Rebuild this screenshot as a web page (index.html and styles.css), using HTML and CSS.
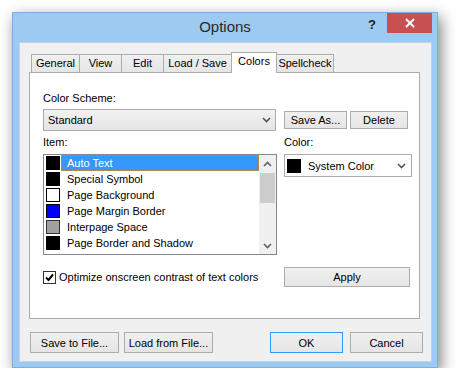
FILE: index.html
```html
<!DOCTYPE html>
<html lang="en">
<head>
  <meta charset="UTF-8" />
  <title>Options</title>
  <link rel="stylesheet" href="styles.css">
</head>
<body>
  <div class="window">
    <div class="titlebar">
      <span class="title">Options</span>
      <div class="controls">
        <span class="help">?</span>
        <span class="close">
          <svg width="10" height="10" viewBox="0 0 10 10"><path d="M1 1L9 9M9 1L1 9" stroke="#fff" stroke-width="2"/></svg>
        </span>
      </div>
    </div>

    <div class="client">
      <div class="tabs">
        <div class="tab tab-general">General</div>
        <div class="tab tab-view">View</div>
        <div class="tab tab-edit">Edit</div>
        <div class="tab tab-load">Load / Save</div>
        <div class="tab tab-colors active">Colors</div>
        <div class="tab tab-spell">Spellcheck</div>
      </div>

      <div class="pane">
        <div class="label">Color Scheme:</div>

        <div class="row row-scheme">
          <div class="col-left">
            <div class="dropdown scheme">
              <span>Standard</span>
              <svg class="chev" width="9" height="6" viewBox="0 0 9 6"><path d="M1 1L4.5 4.5L8 1" fill="none" stroke="#555" stroke-width="1.6"/></svg>
            </div>
          </div>
          <div class="col-right">
            <button class="btn btn-saveas">Save As...</button>
            <button class="btn btn-delete">Delete</button>
          </div>
        </div>

        <div class="row row-labels">
          <div class="col-left label">Item:</div>
          <div class="col-right label">Color:</div>
        </div>

        <div class="row row-list">
          <div class="col-left">
            <div class="listbox">
              <div class="items">
                <div class="item selected"><span class="sw sw-black"></span><span class="name">Auto Text</span></div>
                <div class="item"><span class="sw sw-black"></span><span class="name">Special Symbol</span></div>
                <div class="item"><span class="sw sw-white"></span><span class="name">Page Background</span></div>
                <div class="item"><span class="sw sw-blue"></span><span class="name">Page Margin Border</span></div>
                <div class="item"><span class="sw sw-gray"></span><span class="name">Interpage Space</span></div>
                <div class="item"><span class="sw sw-black"></span><span class="name">Page Border and Shadow</span></div>
              </div>
              <div class="scrollbar">
                <div class="sb-arrow">
                  <svg width="9" height="6" viewBox="0 0 9 6"><path d="M1 5L4.5 1.5L8 5" fill="none" stroke="#606060" stroke-width="1.6"/></svg>
                </div>
                <div class="sb-thumb"></div>
                <div class="sb-track"></div>
                <div class="sb-arrow">
                  <svg width="9" height="6" viewBox="0 0 9 6"><path d="M1 1L4.5 4.5L8 1" fill="none" stroke="#606060" stroke-width="1.6"/></svg>
                </div>
              </div>
            </div>
          </div>
          <div class="col-right">
            <div class="dropdown color-pick">
              <span class="sw sw-black"></span>
              <span class="pick-name">System Color</span>
              <svg class="chev" width="9" height="6" viewBox="0 0 9 6"><path d="M1 1L4.5 4.5L8 1" fill="none" stroke="#555" stroke-width="1.6"/></svg>
            </div>
          </div>
        </div>

        <div class="row row-check">
          <div class="col-left check">
            <span class="checkbox">
              <svg width="11" height="11" viewBox="0 0 11 11"><path d="M2 5.5L4.5 8L9 2.5" fill="none" stroke="#000" stroke-width="2"/></svg>
            </span>
            <span>Optimize onscreen contrast of text colors</span>
          </div>
          <div class="col-right">
            <button class="btn btn-apply">Apply</button>
          </div>
        </div>
      </div>

      <div class="footer">
        <button class="btn btn-file">Save to File...</button>
        <button class="btn btn-file">Load from File...</button>
        <button class="btn btn-dlg btn-ok">OK</button>
        <button class="btn btn-dlg">Cancel</button>
      </div>
    </div>
  </div>
</body>
</html>
```

FILE: styles.css
```css
* {
  box-sizing: border-box;
}

body {
  margin: 0;
  background: #fff;
  font-family: "Liberation Sans", Arial, sans-serif;
  font-size: 11px;
  color: #000;
}

.window {
  margin: 12px 0 0 12px;
  width: 426px;
  height: 356px;
  background: #9ccaf0;
  border: 1px solid #7eaedb;
  box-shadow: 3px 5px 14px rgba(0, 0, 0, 0.5);
  display: flex;
  flex-direction: column;
}

.titlebar {
  height: 29px;
  display: grid;
  grid-template-columns: 1fr auto 1fr;
}

.title {
  grid-column: 2;
  font-size: 15px;
  line-height: 28px;
  color: #2b2b2b;
}

.controls {
  grid-column: 3;
  justify-self: end;
  display: flex;
  align-items: flex-start;
  margin-right: 5px;
}

.help {
  font-weight: bold;
  font-size: 13px;
  line-height: 13px;
  margin: 5px 11px 0 0;
  color: #222;
}

.close {
  width: 45px;
  height: 20px;
  background: #c75050;
  display: flex;
  align-items: center;
  justify-content: center;
}

.client {
  flex: 1;
  margin: 0 5px 5px 6px;
  background: #f0f0f0;
  border: 1px solid #bcd4ea;
}

/* tabs */
.tabs {
  display: flex;
  align-items: flex-end;
  height: 29px;
  padding: 9px 0 0 11px;
}

.tab {
  height: 18px;
  line-height: 16px;
  text-align: center;
  border: 1px solid #acacac;
  border-bottom: none;
  background: linear-gradient(#f0f0f0, #e5e5e5);
  margin-left: -1px;
}

.tab:first-child {
  margin-left: 0;
}

.tab.active {
  height: 21px;
  line-height: 17px;
  background: #fff;
  margin-bottom: -1px;
  position: relative;
  z-index: 1;
}

.tab-general { width: 49px; }
.tab-view { width: 43px; }
.tab-edit { width: 43px; }
.tab-load { width: 69px; }
.tab-colors { width: 46px; }
.tab-spell { width: 58px; }

.pane {
  margin-left: 9px;
  width: 391px;
  height: 247px;
  background: #fff;
  border: 1px solid #acacac;
  padding: 18px 0 0 13px;
}

.label {
  line-height: 14px;
}

.row {
  display: flex;
  gap: 7px;
}

.col-left {
  width: 234px;
}

.col-right {
  width: 128px;
}

.row-scheme {
  margin-top: 4px;
  align-items: center;
}

.row-scheme .col-right {
  display: flex;
  gap: 3px;
}

.row-labels {
  margin-top: 4px;
}

.row-list {
  margin-top: 5px;
  align-items: flex-start;
}

.row-check {
  margin-top: 12px;
  align-items: center;
}

/* dropdowns */
.dropdown {
  display: flex;
  align-items: center;
  border: 1px solid #acacac;
}

.dropdown .chev {
  margin-left: auto;
}

.scheme {
  width: 233px;
  height: 22px;
  padding: 0 4px 0 4px;
  background: linear-gradient(#f2f2f2, #e4e4e4);
}

.color-pick {
  width: 128px;
  height: 23px;
  padding: 0 5px 0 2px;
  background: #fff;
}

.pick-name {
  margin-left: 7px;
}

/* buttons */
.btn {
  font-family: inherit;
  font-size: 11px;
  color: #000;
  border: 1px solid #acacac;
  background: linear-gradient(#f0f0f0, #e5e5e5);
  padding: 0;
}

.btn-saveas { width: 63px; height: 18px; }
.btn-delete { width: 58px; height: 18px; }
.btn-apply { width: 126px; height: 20px; }

/* list box */
.listbox {
  width: 234px;
  height: 101px;
  border: 1px solid #828790;
  display: flex;
  overflow: hidden;
}

.items {
  flex: 1;
}

.item {
  height: 16px;
  display: flex;
  align-items: center;
}

.sw {
  width: 14px;
  height: 14px;
  border: 1px solid #000;
  flex: none;
}

.item .sw {
  margin: 0 1px 0 2px;
}

.sw-black { background: #000; }
.sw-white { background: #fff; }
.sw-blue { background: #0000ff; }
.sw-gray { background: #a0a0a0; border-color: #333; }

.name {
  flex: 1;
  height: 16px;
  line-height: 16px;
  padding-left: 6px;
}

.item.selected .name {
  background: #3399ff;
  color: #fff;
  outline: 1px dotted #c98a3a;
  outline-offset: -1px;
}

.scrollbar {
  width: 17px;
  background: #f0f0f0;
  display: flex;
  flex-direction: column;
  align-items: center;
}

.sb-arrow {
  height: 17px;
  display: flex;
  align-items: center;
  justify-content: center;
}

.sb-thumb {
  width: 15px;
  height: 30px;
  margin-top: 1px;
  background: #cdcdcd;
}

.sb-track {
  flex: 1;
}

/* checkbox */
.check {
  display: flex;
  align-items: center;
  gap: 3px;
}

.checkbox {
  width: 13px;
  height: 13px;
  border: 1px solid #333;
  background: #fff;
  display: flex;
  align-items: center;
  justify-content: center;
}

/* footer */
.footer {
  display: flex;
  margin-top: 13px;
  padding: 0 8px 0 10px;
}

.btn-file {
  width: 89px;
  height: 21px;
  margin-right: 5px;
}

.btn-dlg {
  width: 73px;
  height: 21px;
}

.btn-ok {
  margin-left: auto;
  margin-right: 7px;
  border-color: #3399ff;
}
```
